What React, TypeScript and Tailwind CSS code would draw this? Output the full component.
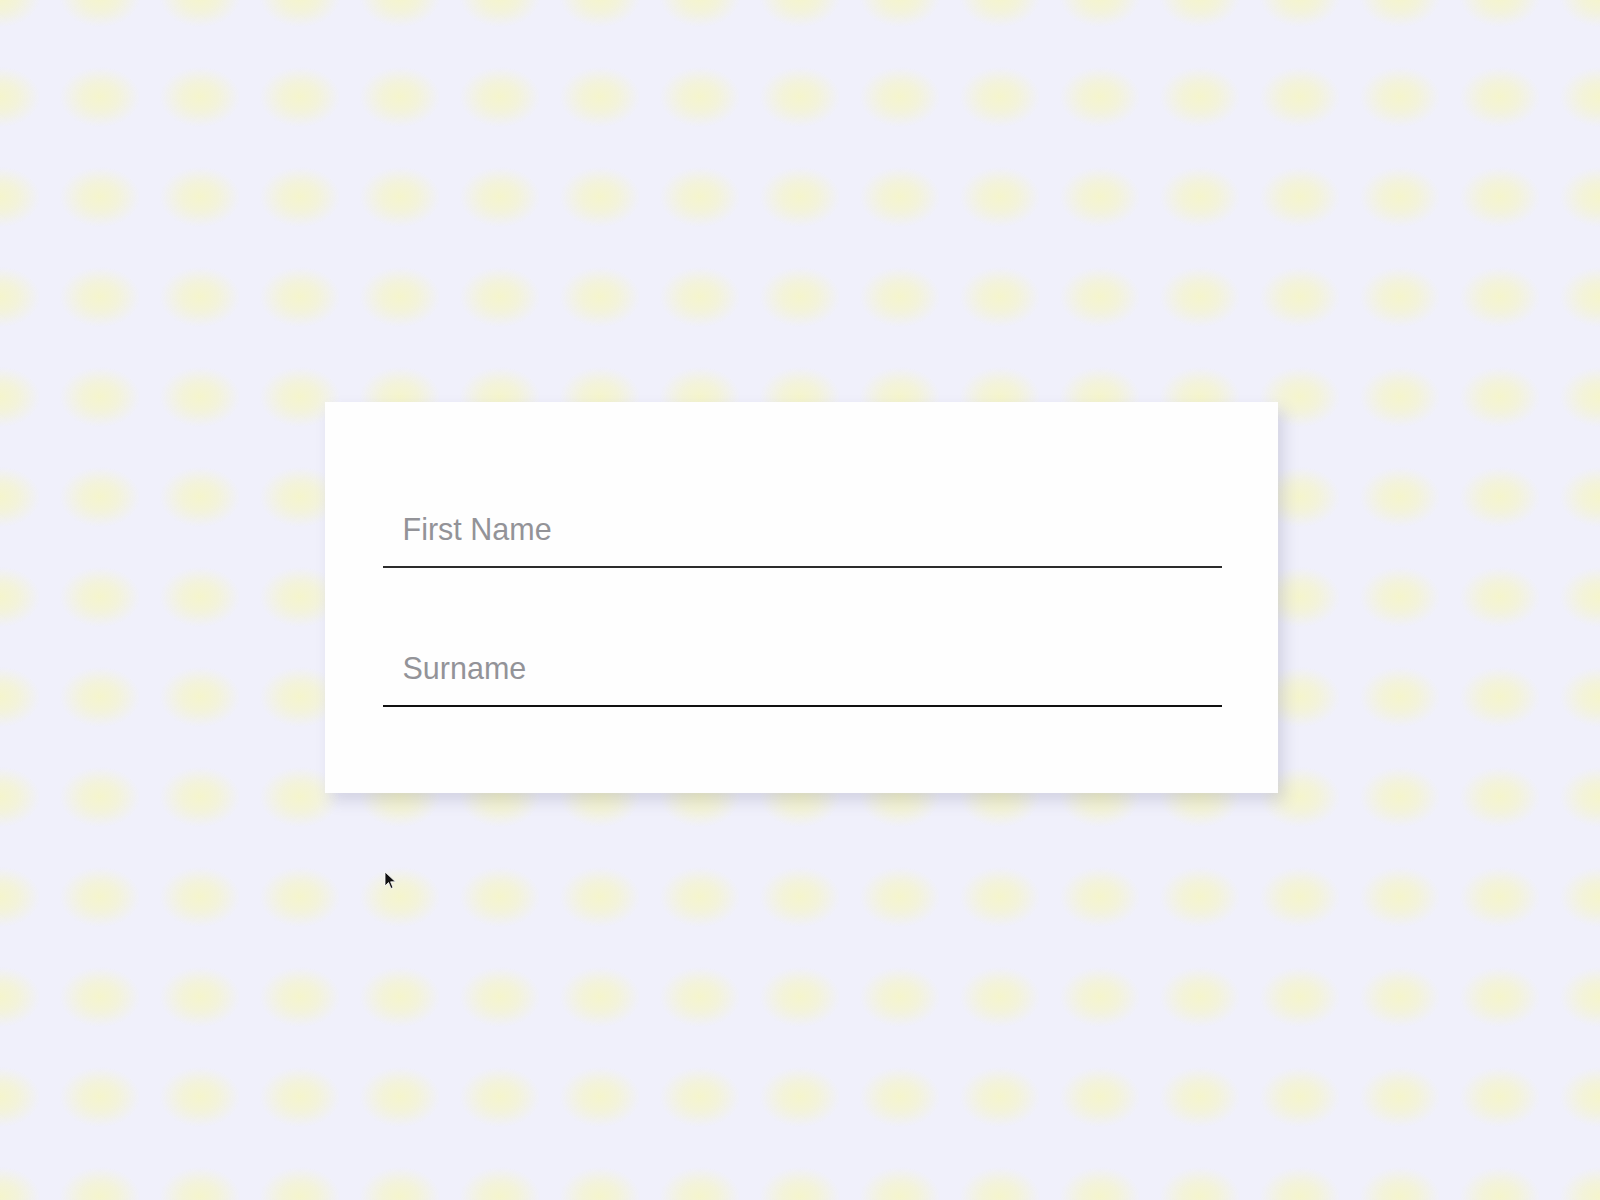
import React from 'react';

function Field({ placeholder, line }: { placeholder: string; line: string }) {
  return (
    <input
      type="text"
      placeholder={placeholder}
      className={`block h-[75px] w-full border-b-2 bg-transparent pt-[20px] pb-[19px] pl-[20px] text-[30.5px] leading-[34px] text-[#222] outline-none placeholder:text-[#939398] ${line}`}
    />
  );
}

function Cursor() {
  return (
    <svg
      className="absolute left-[384px] top-[871px]"
      width="13"
      height="19"
      viewBox="0 0 13 19"
    >
      <path
        d="M1 1 L1 15 L4.5 11.5 L7 17.5 L9 16.6 L6.6 10.8 L11.5 10.8 Z"
        fill="#111"
        stroke="#fff"
        strokeWidth="0.8"
        strokeLinejoin="round"
      />
    </svg>
  );
}

export default function App() {
  return (
    <div
      className="relative flex h-[1200px] w-full items-center justify-center bg-[#f0f0fb] bg-[radial-gradient(ellipse_40px_30px_at_center,#f5f5cc_0%,#f3f3da_45%,rgba(240,240,251,0)_100%)] bg-size-[100px_100px] bg-position-[50px_47px] pb-[6px] pl-[2px]"
      style={{ fontFamily: '"Liberation Sans", Arial, sans-serif' }}
    >
      <div className="flex h-[391px] w-[953px] flex-col gap-[64px] bg-[#fefefe] pl-[58px] pr-[56px] pt-[91px] shadow-[6px_8px_14px_rgba(70,70,110,0.17)]">
        <Field placeholder="First Name" line="border-[#2c2c2c]" />
        <Field placeholder="Surname" line="border-[#111]" />
      </div>
      <Cursor />
    </div>
  );
}
